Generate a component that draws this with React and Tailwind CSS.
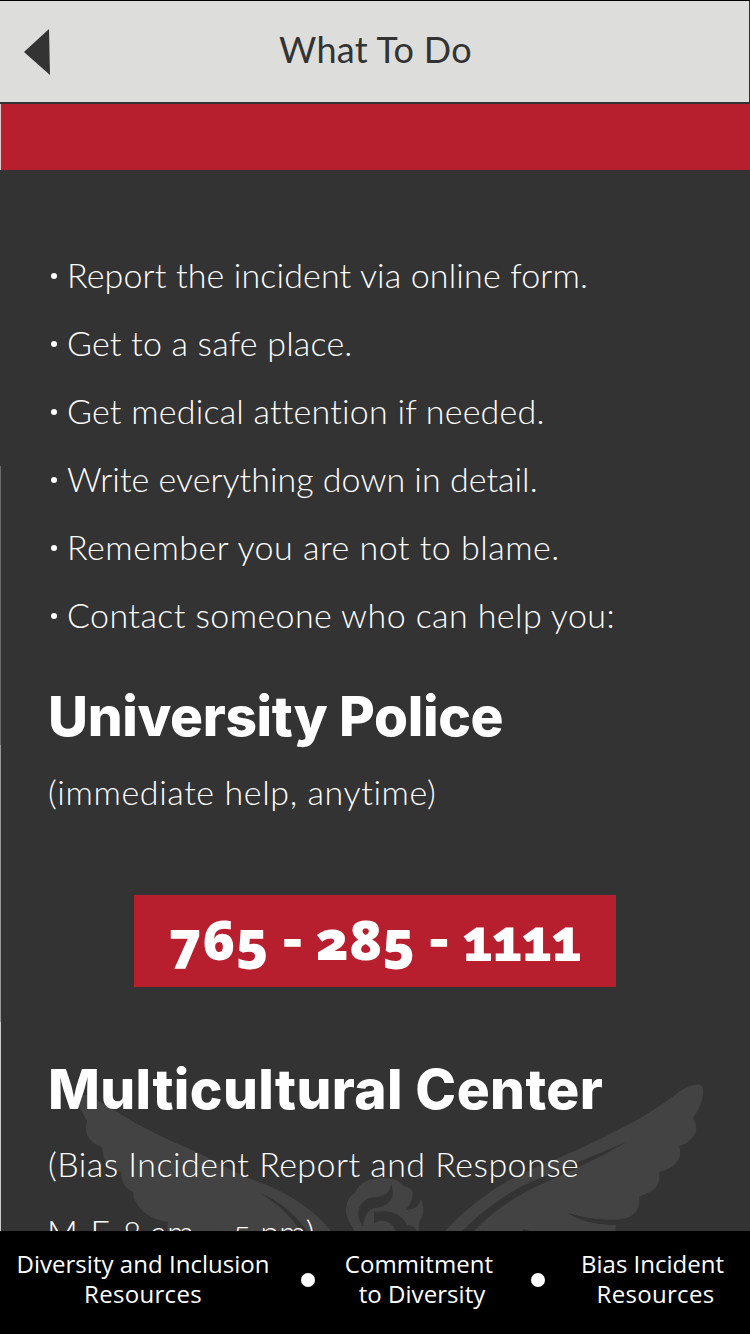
const steps = [
  { text: "Report the incident via online form.", style: "ml-[67px] tracking-[0.14px]" },
  { text: "Get to a safe place.", style: "ml-[67px] tracking-[0.2px]" },
  { text: "Get medical attention if needed.", style: "ml-[67px] tracking-[0.21px]" },
  { text: "Write everything down in detail.", style: "ml-[67px] tracking-[0.02px]" },
  { text: "Remember you are not to blame.", style: "ml-[67px] tracking-[0.5px]" },
  { text: "Contact someone who can help you:", style: "ml-[67px] tracking-[0.41px]" },
];

function Cardinal() {
  return (
    <svg className="absolute left-0 top-[1060px] h-[171px] w-[750px]" viewBox="0 1060 750 171" aria-hidden="true">
      <g fill="#434343">
        <path d="M77 1103Q80 1092 90 1096Q103 1103 117 1112Q150 1133 197 1152Q225 1167 247 1178Q302 1195 331 1231H167L168 1222Q142 1218 134 1198L133 1192Q122 1188 121 1172Q103 1169 102 1147Q84 1141 86 1125L87 1121Z" />
        <path d="M445 1231Q485 1188 535 1168Q600 1141 642 1117Q665 1103 680 1091Q694 1083 700 1084.500Q705 1087 702 1100Q700 1108 693 1118Q701 1131 690 1140Q685 1145 679 1146Q683 1157 674 1165Q668 1170 659 1172Q661 1185 652 1191Q646 1194 639 1197Q641 1210 631 1216Q625 1220 608 1220Q585 1219 568 1213Q583 1224 616 1225L615 1231Z" />
        <path d="M354 1231L352 1226Q343 1214 347 1203Q350 1195 355 1193Q360 1178 385 1178Q397 1178 404 1186Q412 1188 413 1193Q412 1204 405 1210Q418 1210 421 1199Q425 1210 422 1217Q418 1222 419 1231Z" />
      </g>
      <g fill="#333333">
        <path d="M260 1193Q289 1205 307 1231H301Q284 1207 260 1193Z" />
        <path d="M627 1142Q586 1165 544 1183Q501 1202 474 1231H462Q498 1196 535 1180Q590 1157 627 1142Z" />
        <path d="M568 1213Q590 1220 612 1220L616 1225Q583 1224 568 1213Z" />
        <path d="M523 1229L530 1231H523Z" />
        <path d="M391 1184Q396 1196 388 1203Q384 1207 375 1208Q365 1209 363 1227Q354 1213 362 1203Q368 1196 378 1197Q390 1195 391 1184Z" />
        <path d="M374 1212Q399 1208 407 1225Q413 1224 417 1231H395Q394 1224 385 1221Q379 1220 374 1223Z" />
      </g>
    </svg>
  );
}

export default function App() {
  return (
    <div className="relative flex h-[1334px] w-[750px] flex-col overflow-hidden bg-[#333333] font-['Lato',sans-serif] text-white">
      <header className="flex h-[104px] shrink-0 items-center border-b-2 border-t border-b-[#333333] border-t-black bg-[#dddddb] pb-[5px] text-[#333333] shadow-[inset_-1px_0_0_#333333]">
        <svg className="ml-6 mt-[6px] h-[46px] w-[26px]" viewBox="0 0 26 46" aria-hidden="true">
          <path d="M0 23L25 0L26 46Z" fill="#333333" />
        </svg>
        <h1 className="mr-[49px] flex-1 text-center text-[36px] font-normal tracking-[0.3px]">What To Do</h1>
      </header>
      <div className="h-[66px] shrink-0 border-l border-[#e3c6c8] bg-[#b71f2f]" />

      <Cardinal />
      <div className="absolute left-0 top-[466px] h-[279px] w-px bg-[#6a6a6a]" />
      <div className="absolute left-0 top-[745px] h-[277px] w-px bg-[#989898]" />
      <div className="absolute left-0 top-[1022px] h-[209px] w-px bg-[#cccccc]" />

      <main className="relative h-[1061px] shrink-0 overflow-hidden pt-[71px] text-[34px] font-light leading-[68px]">
        <ul>
          {steps.map((s) => (
            <li key={s.text} className="flex h-[68px] items-center whitespace-nowrap">
              <span className="-mr-[57px] ml-[51px] mt-[2px] size-[6px] rounded-full bg-white" />
              <span className={s.style}>{s.text}</span>
            </li>
          ))}
        </ul>
        <h2 className="ml-[48px] mt-[33px] whitespace-nowrap font-['Inter',sans-serif] text-[55px] font-extrabold leading-[68px] tracking-[-0.35px]">University Police</h2>
        <p className="ml-[48px] mt-[8px] whitespace-nowrap tracking-[0.6px]">(immediate help, anytime)</p>
        <div className="ml-[134px] mt-[69px] flex h-[92px] w-[482px] items-baseline whitespace-pre bg-[#b71f2f] pl-[35px] text-[56px] font-black leading-[88px] oldstyle-nums">
          <span className="font-['Open_Sans',sans-serif] text-[55px] font-extrabold">765</span>
          <span className="tracking-[-0.3px] [-webkit-text-stroke:1.5px_white]"> - </span>
          <span className="font-['Open_Sans',sans-serif] text-[55px] font-extrabold">285</span>
          <span className="tracking-[-0.3px] [-webkit-text-stroke:1.5px_white]"> - </span>
          <span className="tracking-[-0.6px] [-webkit-text-stroke:2px_white]">1111</span>
        </div>
        <h2 className="ml-[48px] mt-[68px] whitespace-nowrap font-['Inter',sans-serif] text-[55px] font-extrabold leading-[68px] tracking-[0.4px]">Multicultural Center</h2>
        <p className="ml-[48px] mt-[7px] whitespace-nowrap tracking-[0.46px]">(Bias Incident Report and Response</p>
        <p className="ml-[47px] whitespace-nowrap oldstyle-nums">M-F, 8 am – 5 pm)</p>
      </main>

      <footer className="relative flex h-[103px] shrink-0 bg-black pt-[18px] text-center font-['Open_Sans',sans-serif] text-[24px] font-normal leading-[29.5px]">
        <div className="w-[286px]">
          <div className="tracking-[0.03px]">Diversity and Inclusion</div>
          <div className="tracking-[0.3px]">Resources</div>
        </div>
        <div className="flex w-[44px] justify-center pt-[24px]">
          <span className="size-[14px] rounded-full bg-white" />
        </div>
        <div className="w-[178px]">
          <div className="tracking-[0.1px]">Commitment</div>
          <div className="pl-[6px] tracking-[0.05px]">to Diversity</div>
        </div>
        <div className="flex w-[60px] justify-center pt-[24px]">
          <span className="size-[14px] rounded-full bg-white" />
        </div>
        <div className="w-[169px]">
          <div className="tracking-[0px]">Bias Incident</div>
          <div className="pl-[6px] tracking-[0.3px]">Resources</div>
        </div>
      </footer>
    </div>
  );
}
